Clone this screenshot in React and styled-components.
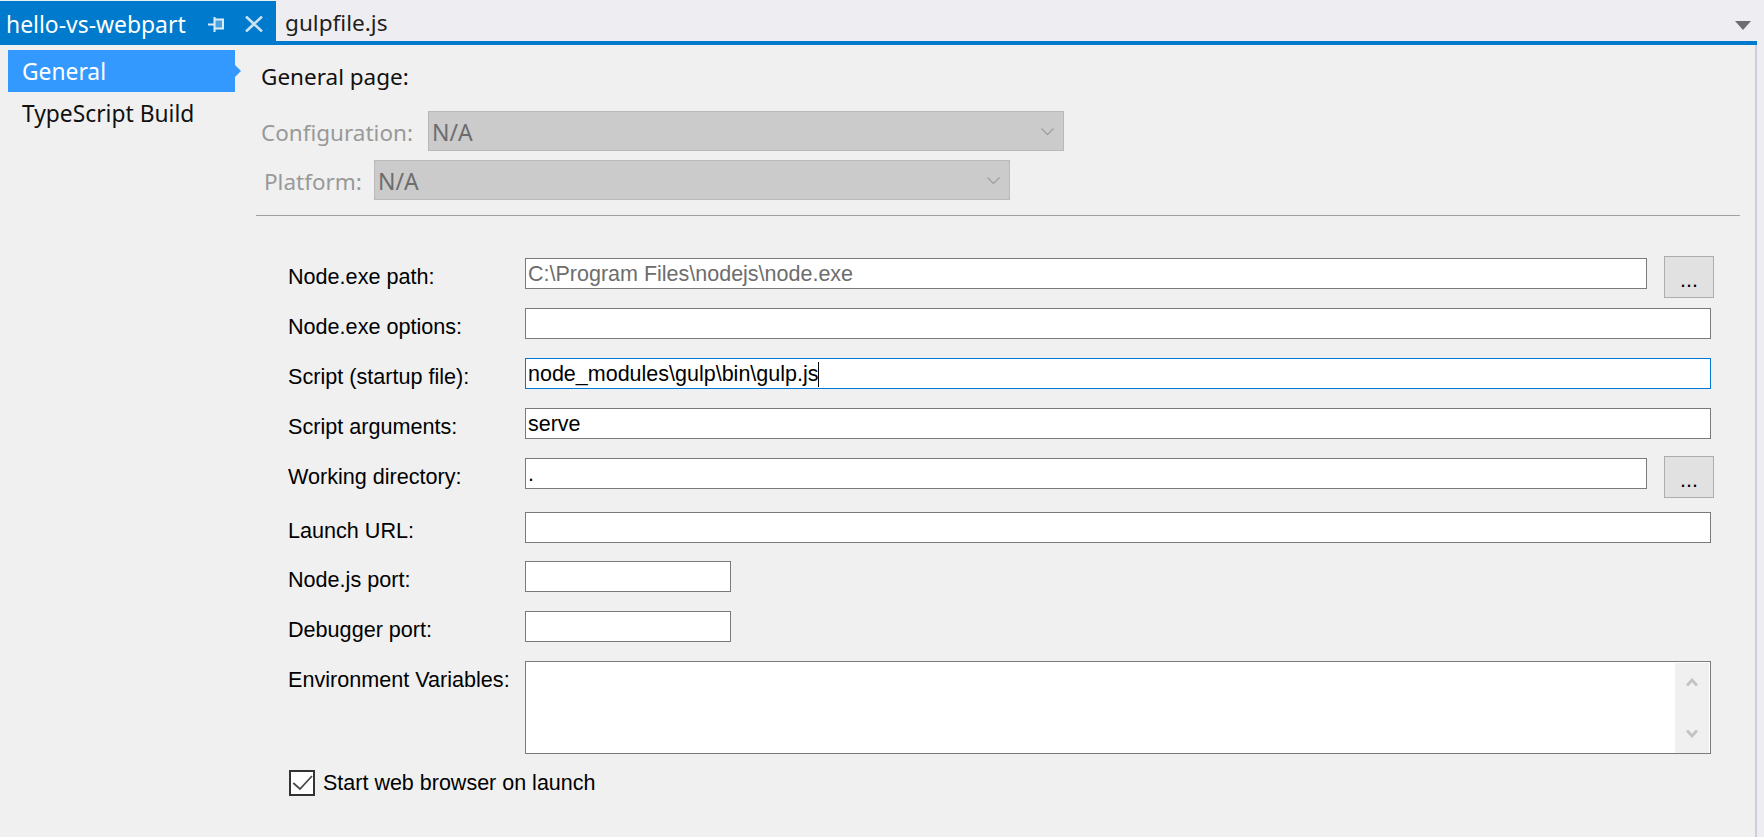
import React from 'react'
import styled, { createGlobalStyle } from 'styled-components'

const Global = createGlobalStyle`
  html, body { margin: 0; padding: 0; height: 100%; background: #eeeef2; overflow: hidden; }
  * { box-sizing: border-box; }
`

const Page = styled.div`
  width: 1764px;
  height: 837px;
  padding-top: 1px;
  display: flex;
  flex-direction: column;
  font-family: "Noto Sans", "Open Sans", sans-serif;
`

const TabBar = styled.div`
  width: 1757px;
  height: 44px;
  display: flex;
  border-bottom: 4px solid #007acc;
  position: relative;
`

const ActiveTab = styled.div`
  width: 276px;
  height: 44px;
  padding: 2px 0 0 6px;
  background: #007acc;
  color: #fff;
  display: flex;
  align-items: center;
  font-size: 22.9px;
  flex-shrink: 0;
`

const TabName = styled.span`
  width: 202px;
`

const TabIcons = styled.span`
  display: flex;
  align-items: center;
  gap: 21px;
`

const Tab = styled.div`
  height: 40px;
  padding: 3px 0 0 9px;
  color: #1e1e1e;
  display: flex;
  align-items: center;
  font-size: 22.6px;
`

const TabMenu = styled.svg`
  position: absolute;
  right: 6px;
  top: 20px;
`

const Body = styled.div`
  flex: 1;
  width: 1757px;
  display: flex;
  background: #f0f0f0;
  border-right: 2px solid #cccedb;
`

const Sidebar = styled.nav`
  width: 256px;
  padding: 5px 0 0 8px;
  flex-shrink: 0;
`

const NavItem = styled.div`
  position: relative;
  width: 227px;
  height: 42px;
  padding-left: 14px;
  display: flex;
  align-items: center;
  font-size: 22.8px;
  color: ${p => (p.$active ? '#fff' : '#111')};
  background: ${p => (p.$active ? '#3399ff' : 'transparent')};

  ${p => p.$active && `
    &::after {
      content: "";
      position: absolute;
      left: 100%;
      top: 15px;
      border-left: 6px solid #3399ff;
      border-top: 6px solid transparent;
      border-bottom: 6px solid transparent;
    }
  `}
`

const Content = styled.main`
  width: 1484px;
  display: flex;
  flex-direction: column;
`

const PageTitle = styled.div`
  height: 66px;
  padding: 17px 0 0 5px;
  font-size: 22.5px;
  line-height: 30px;
  color: #111;
`

const ConfigRow = styled.div`
  height: 49px;
  padding-left: ${p => p.$indent}px;
  display: flex;
  align-items: flex-start;
`

const ConfigLabel = styled.div`
  width: ${p => p.$width}px;
  height: 40px;
  font-size: 22.5px;
  line-height: 43px;
  color: #999;
`

const Select = styled.div`
  width: ${p => p.$width}px;
  height: 40px;
  padding: 2px 0 0 3px;
  background: #cbcbcb;
  border: 1px solid #b9b9b9;
  color: #6d6d6d;
  display: flex;
  align-items: center;
  justify-content: space-between;
  font-size: 23px;
`

const SelectChevron = styled.svg`
  margin: 0 9px 0 0;
`

const Divider = styled.hr`
  width: 1484px;
  height: 1px;
  margin: 6px 0 42px;
  border: 0;
  background: #a0a0a0;
`

const Form = styled.div`
  padding-left: 32px;
  font-family: "Liberation Sans", Arial, sans-serif;
`

const Row = styled.div`
  height: ${p => p.$height || 50}px;
  display: flex;
  align-items: flex-start;
`

const FieldLabel = styled.label`
  width: 237px;
  height: 31px;
  flex-shrink: 0;
  font-size: 21.6px;
  line-height: 38px;
  color: #000;
`

const Field = styled.div`
  width: ${p => p.$width || 1186}px;
  height: 31px;
  padding: 1px 0 0 2px;
  background: #fff;
  border: 1px solid ${p => (p.$focused ? '#0078d7' : '#7a7a7a')};
  color: ${p => (p.$muted ? '#6d6d6d' : '#000')};
  font-size: 21.5px;
  line-height: 27px;
  white-space: nowrap;
  display: flex;
  align-items: center;
`

const Caret = styled.span`
  width: 1px;
  height: 25px;
  background: #000;
`

const BrowseButton = styled.button`
  width: 50px;
  height: 42px;
  margin: -2px 0 0 17px;
  padding: 6px 0 0;
  background: #e1e1e1;
  border: 1px solid #adadad;
  color: #000;
  font: 21.5px "Liberation Sans", Arial, sans-serif;
`

const TextArea = styled.div`
  width: 1186px;
  height: 93px;
  background: #fff;
  border: 1px solid #7a7a7a;
  display: flex;
  justify-content: flex-end;
`

const ScrollTrack = styled.div`
  width: 34px;
  margin: 1px 1px 0 0;
  background: #f0f0f0;
  display: flex;
  flex-direction: column;
  align-items: center;
  justify-content: space-between;
  padding: 14px 0;
`

const CheckRow = styled.div`
  display: flex;
  align-items: center;
  gap: 8px;
  margin: 16px 0 0 1px;
`

const CheckBox = styled.div`
  width: 26px;
  height: 26px;
  background: #fff;
  border: 2px solid #333;
  display: flex;
`

const CheckLabel = styled.span`
  font-size: 21.5px;
`

const ScrollChevron = ({ up }) => (
  <svg width="12" height="10" viewBox="0 0 12 10">
    <path d={up ? 'M1 8.5 L6 3 L11 8.5' : 'M1 1.5 L6 7 L11 1.5'} fill="none" stroke="#c2c2c2" strokeWidth="2.8" />
  </svg>
)

const rows = [
  { label: 'Node.exe path:', value: 'C:\\Program Files\\nodejs\\node.exe', muted: true, width: 1122, browse: true },
  { label: 'Node.exe options:' },
  { label: 'Script (startup file):', value: 'node_modules\\gulp\\bin\\gulp.js', focused: true },
  { label: 'Script arguments:', value: 'serve' },
  { label: 'Working directory:', value: '.', width: 1122, browse: true, height: 54 },
  { label: 'Launch URL:', height: 49 },
  { label: 'Node.js port:', width: 206 },
  { label: 'Debugger port:', width: 206 },
]

const DisabledSelect = ({ width }) => (
  <Select $width={width}>
    N/A
    <SelectChevron width="13" height="8" viewBox="0 0 13 8">
      <path d="M0.5 0.5 L6.5 6.5 L12.5 0.5" fill="none" stroke="#a0a0a0" strokeWidth="1.3" />
    </SelectChevron>
  </Select>
)

const App = () => {
  return (
    <Page>
      <Global />
      <TabBar>
        <ActiveTab>
          <TabName>hello-vs-webpart</TabName>
          <TabIcons>
            <svg width="16" height="15" viewBox="0 0 16 15">
              <path d="M0 7.5 H6 M6.5 0 V15 M6.5 2.5 H15 V11.5 H6.5" fill="none" stroke="#dcedf8" strokeWidth="2" />
              <path d="M6.5 2.5 H15 V11.5 H6.5 Z" fill="#dcedf8" fillOpacity="0.35" />
            </svg>
            <svg width="18" height="16" viewBox="0 0 18 16">
              <path d="M1 0.5 L17 15.5 M17 0.5 L1 15.5" fill="none" stroke="#c8e2f5" strokeWidth="2.6" />
            </svg>
          </TabIcons>
        </ActiveTab>
        <Tab>gulpfile.js</Tab>
        <TabMenu width="16" height="9" viewBox="0 0 16 9">
          <path d="M0 0 H16 L8 9 Z" fill="#6d6d6d" />
        </TabMenu>
      </TabBar>
      <Body>
        <Sidebar>
          <NavItem $active>General</NavItem>
          <NavItem>TypeScript Build</NavItem>
        </Sidebar>
        <Content>
          <PageTitle>General page:</PageTitle>
          <ConfigRow $indent={5}>
            <ConfigLabel $width={167}>Configuration:</ConfigLabel>
            <DisabledSelect width={636} />
          </ConfigRow>
          <ConfigRow $indent={8}>
            <ConfigLabel $width={110}>Platform:</ConfigLabel>
            <DisabledSelect width={636} />
          </ConfigRow>
          <Divider />
          <Form>
            {rows.map(row => (
              <Row key={row.label} $height={row.height}>
                <FieldLabel>{row.label}</FieldLabel>
                <Field $width={row.width} $muted={row.muted} $focused={row.focused}>
                  {row.value}
                  {row.focused && <Caret />}
                </Field>
                {row.browse && <BrowseButton>...</BrowseButton>}
              </Row>
            ))}
            <Row $height={93}>
              <FieldLabel>Environment Variables:</FieldLabel>
              <TextArea>
                <ScrollTrack>
                  <ScrollChevron up />
                  <ScrollChevron />
                </ScrollTrack>
              </TextArea>
            </Row>
            <CheckRow>
              <CheckBox>
                <svg width="22" height="22" viewBox="0 0 22 22">
                  <path d="M2.3 11 L9 17 L21 4" fill="none" stroke="#4a4a4a" strokeWidth="1.8" />
                </svg>
              </CheckBox>
              <CheckLabel>Start web browser on launch</CheckLabel>
            </CheckRow>
          </Form>
        </Content>
      </Body>
    </Page>
  )
}

export default App
